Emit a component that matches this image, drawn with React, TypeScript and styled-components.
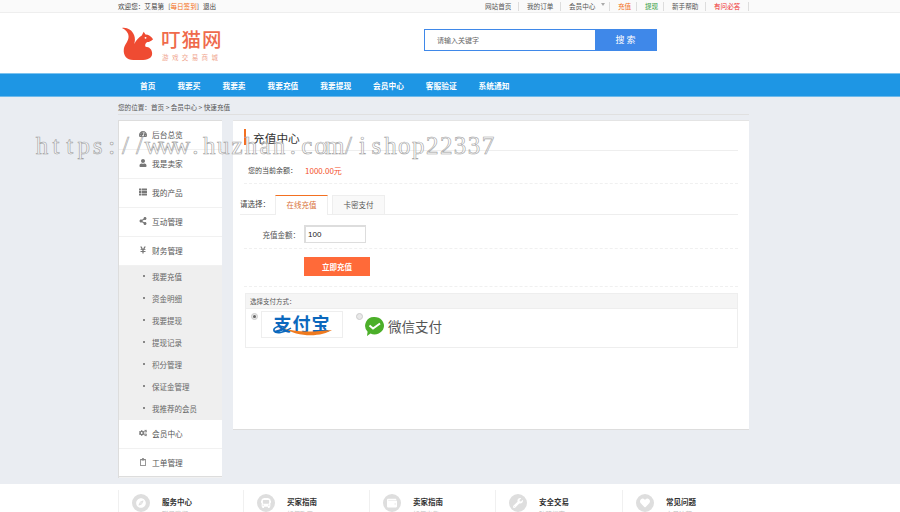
import React from "react";
import styled, { createGlobalStyle } from "styled-components";
import { FaTachometerAlt, FaUser, FaThList, FaShareAlt, FaYenSign, FaCogs, FaRegClipboard, FaCompass, FaBus, FaWallet, FaWrench, FaHeart } from "react-icons/fa";

const Global = createGlobalStyle`
  html, body { margin: 0; padding: 0; height: 512px; overflow: hidden; background: #eaedf2; }
  body { font-family: "Noto Sans CJK SC", "Liberation Sans", sans-serif; color: #444; }
  * { box-sizing: border-box; }
`;
const Page = styled.div`position: relative; width: 900px; height: 512px; overflow: hidden;`;
const TopBar = styled.div`height: 13px; background: #fafafa; border-bottom: 1px solid #eee; padding-left: 118px; display: flex; width: 100%;`;
const TopInner = styled.div`width: 631px; display: flex; justify-content: space-between; align-items: center; font-size: 6.6px; line-height: 12px; color: #444;`;
const Welcome = styled.div`display: flex; gap: 4px; white-space: nowrap;`;
const SignIn = styled.span`color: #f37021;`;
const TopLinks = styled.div`display: flex; height: 12px; align-items: center;`;
const TopLink = styled.span<{ $c?: string; $w: number }>`
  width: ${p => p.$w}px; height: 9px; line-height: 9px; border-right: 1px solid #ddd; white-space: nowrap; color: ${p => p.$c || "#555"};
  display: flex; align-items: center; gap: 6px; padding-left: 8px;
`;
const Caret = styled.i`width: 0; height: 0; border: 2.5px solid transparent; border-top: 3px solid #aaa; border-bottom: 0; margin-bottom: 3px;`;
const Header = styled.div`height: 60px; background: #fff; padding-left: 121px; display: flex; align-items: flex-start;`;
const Logo = styled.div`width: 303px; display: flex; padding-top: 14px; gap: 6px;`;
const LogoText = styled.div`display: flex; flex-direction: column; padding-top: 3px;`;
const LogoTitle = styled.div`font-size: 19.5px; line-height: 18px; font-weight: 500; color: #ef6a4c; letter-spacing: 1px; white-space: nowrap;`;
const LogoSub = styled.div`font-size: 6.5px; line-height: 8px; margin-top: 5px; color: #f0a58e; letter-spacing: 3.4px; padding-left: 1px; white-space: nowrap;`;
const Search = styled.div`display: flex; margin-top: 16px; height: 22px;`;
const SearchInput = styled.div`width: 172px; height: 22px; border: 1px solid #3f88e9; font-size: 7px; line-height: 20px; color: #666; padding-left: 12px;`;
const SearchButton = styled.div`width: 61px; background: #3f88e9; color: #fff; font-size: 9px; line-height: 22px; text-align: center; letter-spacing: 2px;`;
const Nav = styled.div`height: 24px; background: #1e96e4; border-top: 1px solid #7cc3ef; border-bottom: 1px solid #6db9ea; padding-left: 140px; display: flex; gap: 22px; color: #fff; font-size: 7.7px; font-weight: 700; line-height: 24px; white-space: nowrap;`;
const Content = styled.div`width: 631px; margin-left: 118px;`;
const Crumb = styled.div`height: 17px; margin-top: 1px; font-size: 6.6px; line-height: 18px; color: #555; border-bottom: 1px solid #e0e0e0; white-space: nowrap;`;
const Columns = styled.div`display: flex; gap: 11px; align-items: flex-start; margin-top: 5px;`;
const Side = styled.div`width: 104px; height: 358px; background: #fff; border-top: 1px solid #ddd; border-bottom: 2px solid #ddd; border-left: 1px solid #ddd; display: flex; flex-direction: column;`;
const SideItem = styled.div`height: 29px; flex: none; display: flex; align-items: center; padding: 0 0 2px 20px; gap: 5px; font-size: 7.7px; color: #555; border-bottom: 1px solid #f1f1f1; white-space: nowrap; svg { width: 8px; height: 8px; color: #777; flex: none; }`;
const SubList = styled.div`background: #efefef; height: 154px;`;
const SubItem = styled.div`height: 22px; display: flex; align-items: center; padding: 0 0 2px 24px; gap: 7px; font-size: 7.5px; color: #666; white-space: nowrap; &::before { content: ""; width: 2px; height: 2px; background: #888; }`;
const Panel = styled.div`width: 516px; height: 310px; background: #fff; border-bottom: 1px solid #ddd; padding: 8px 11px 0 7px; border-top: 1px solid #e4e4e4;`;
const Title = styled.div`height: 22px; margin-left: 4px; border-bottom: 1px solid #eee; display: flex;`;
const TitleText = styled.div`height: 16px; border-left: 2px solid #f37021; padding-left: 7px; font-size: 11.7px; line-height: 18px; color: #333;`;
const Balance = styled.div`margin-left: 4px; height: 33px; border-bottom: 1px dashed #f0f0f0; font-size: 7px; line-height: 39px; padding-left: 4px; display: flex; gap: 8px; white-space: nowrap;`;
const Money = styled.span`color: #f4512c; font-size: 8px;`;
const TabRow = styled.div`height: 31px; border-bottom: 1px solid #eee; display: flex; align-items: flex-end; font-size: 7.5px; gap: 4px;`;
const ChooseLabel = styled.div`width: 31px; height: 19px; line-height: 18px; white-space: nowrap;`;
const Tab = styled.div<{ $on?: boolean }>`
  width: 53px; height: ${p => (p.$on ? 20 : 19)}px; line-height: 18px; text-align: center;
  border-top: 1px solid ${p => (p.$on ? "#f37021" : "#eee")}; border-left: 1px solid #eee; border-right: 1px solid #eee;
  background: ${p => (p.$on ? "#fff" : "#f9f9f9")}; color: ${p => (p.$on ? "#d9733a" : "#555")}; margin-bottom: ${p => (p.$on ? "-1px" : "0")};
`;
const FormRow = styled.div`height: 34px; margin-left: 4px; border-bottom: 1px dashed #f0f0f0; display: flex; align-items: flex-start; padding-top: 10px;`;
const FormLabel = styled.div`width: 56px; text-align: right; font-size: 7.5px; line-height: 19px; color: #555; white-space: nowrap;`;
const Amount = styled.div`width: 62px; height: 18px; margin-left: 4px; border: 1px solid #ddd; border-left-width: 2px; border-top-width: 2px; font-family: "Liberation Sans", sans-serif; font-size: 8px; line-height: 16px; padding-left: 2px; color: #222;`;
const ButtonRow = styled.div`height: 38px; margin-left: 4px; border-bottom: 1px dashed #f0f0f0; padding: 8px 0 0 60px;`;
const Submit = styled.div`width: 66px; height: 19px; background: #ff6a39; color: #fff; font-size: 7.5px; font-weight: 700; line-height: 19px; text-align: center;`;
const PayBox = styled.div`height: 55px; margin: 6px 0 0 5px; border: 1px solid #eee; display: flex; flex-direction: column;`;
const PayHead = styled.div`height: 15px; background: #f5f5f5; border-bottom: 1px solid #eee; font-size: 6.5px; line-height: 15px; padding-left: 4px; color: #555; flex: none;`;
const PayRow = styled.div`display: flex; padding: 2px 0 0 5px;`;
const Radio = styled.span`width: 7px; height: 7px; border-radius: 50%; border: 1px solid #ccc; background: #e8e8e8; margin-top: 2px; flex: none; display: flex; align-items: center; justify-content: center;`;
const RadioDot = styled.i`width: 3px; height: 3px; border-radius: 50%; background: #666;`;
const Alipay = styled.div`position: relative; width: 82px; height: 27px; margin: 0 13px 0 3px; border: 1px solid #eee; display: flex; justify-content: center; overflow: hidden;`;
const AlipayText = styled.span`position: relative; font-size: 18px; font-weight: 700; line-height: 23px; color: #0b68bd; letter-spacing: 1px;`;
const Swoosh = styled.svg`position: absolute; left: 9px; top: 11px;`;
const Wechat = styled.div`display: flex; align-items: center; gap: 3px; margin: 3px 0 0 1px; color: #555; font-size: 13.5px; line-height: 20px;`;
const Footer = styled.div`position: absolute; left: 0; right: 0; top: 484px; height: 60px; background: #fff; padding: 6px 0 0 118px; display: flex;`;
const FootCol = styled.div<{ $w: number }>`width: ${p => p.$w}px; height: 40px; border-left: 1px solid #f0f0f0; padding: 4px 0 0 13px; display: flex; gap: 12px;`;
const FootIcon = styled.div`width: 18px; height: 18px; border-radius: 50%; background: #dedede; color: #fff; display: flex; align-items: center; justify-content: center; svg { width: 10px; height: 10px; }`;
const FootTitle = styled.div`font-size: 7.5px; font-weight: 700; line-height: 9px; margin-top: 3px; color: #333;`;
const FootSub = styled.div`font-size: 6.5px; line-height: 9px; margin-top: 4px; color: #bbb;`;
const Watermark = styled.div`position: absolute; left: 35px; top: 130px; display: flex; font-family: "Liberation Serif", serif; font-size: 25px; line-height: 32px; color: rgba(255,255,255,.55); -webkit-text-stroke: 0.6px #a0a0a0; white-space: nowrap; pointer-events: none;`;
const WatermarkChar = styled.span`width: 13.94px; display: flex; justify-content: center;`;

const topLinks: [string, number, string?][] = [["网站首页", 42], ["我的订单", 42], ["会员中心", 49], ["充值", 27, "#f37021"], ["提现", 27, "#2f9a3a"], ["新手帮助", 42], ["有问必答", 43, "#ee2b2b"]];
const subs = ["我要充值", "资金明细", "我要提现", "提现记录", "积分管理", "保证金管理", "我推荐的会员"];
const foot = [
  { t: "服务中心", s: "联系我们", w: 125, i: <FaCompass /> },
  { t: "买家指南", s: "如何购买", w: 126, i: <FaBus /> },
  { t: "卖家指南", s: "如何出售", w: 126, i: <FaWallet /> },
  { t: "安全交易", s: "防骗指南", w: 127, i: <FaWrench /> },
  { t: "常见问题", s: "交易流程", w: 127, i: <FaHeart /> },
];

export default function App() {
  return (
    <Page>
      <Global />
      <TopBar>
        <TopInner>
          <Welcome><span>欢迎您：艾易第</span><span>[<SignIn>每日签到</SignIn>]</span><span>退出</span></Welcome>
          <TopLinks>
            {topLinks.map(([t, w, c]) => (
              <TopLink key={t} $w={w} $c={c}>{t}{t === "会员中心" && <Caret />}</TopLink>
            ))}
          </TopLinks>
        </TopInner>
      </TopBar>
      <Header>
        <Logo>
          <svg width="34" height="33" viewBox="0 0 34 35">
            <path fill="#ef4b32" d="M0 1C5 0 11 3 13 9C14 12 14 15 13 18C15 14 18 11 21 9L23 5L25 8C28 8 31 10 33 13C31 15 29 16 27 16C25 17 24 19 25 21C29 21 32 24 32 28C32 33 27 35 20 35L12 35C5 35 1 30 2 23C3 18 7 15 7 10C7 6 4 3 0 1Z" />
            <circle cx="25" cy="11.5" r="1" fill="#fff" />
          </svg>
          <LogoText>
            <LogoTitle>叮猫网</LogoTitle>
            <LogoSub>游戏交易商城</LogoSub>
          </LogoText>
        </Logo>
        <Search>
          <SearchInput>请输入关键字</SearchInput>
          <SearchButton>搜索</SearchButton>
        </Search>
      </Header>
      <Nav>
        {["首页", "我要买", "我要卖", "我要充值", "我要提现", "会员中心", "客服验证", "系统通知"].map(t => <span key={t}>{t}</span>)}
      </Nav>
      <Content>
        <Crumb>您的位置：首页 &gt; 会员中心 &gt; 快速充值</Crumb>
        <Columns>
          <Side>
            <SideItem><FaTachometerAlt />后台总览</SideItem>
            <SideItem><FaUser />我是卖家</SideItem>
            <SideItem><FaThList />我的产品</SideItem>
            <SideItem><FaShareAlt />互动管理</SideItem>
            <SideItem><FaYenSign />财务管理</SideItem>
            <SubList>{subs.map(s => <SubItem key={s}>{s}</SubItem>)}</SubList>
            <SideItem><FaCogs />会员中心</SideItem>
            <SideItem><FaRegClipboard />工单管理</SideItem>
          </Side>
          <Panel>
            <Title><TitleText>充值中心</TitleText></Title>
            <Balance><span>您的当前余额：</span><Money>1000.00元</Money></Balance>
            <TabRow>
              <ChooseLabel>请选择：</ChooseLabel>
              <Tab $on>在线充值</Tab>
              <Tab>卡密支付</Tab>
            </TabRow>
            <FormRow><FormLabel>充值金额：</FormLabel><Amount>100</Amount></FormRow>
            <ButtonRow><Submit>立即充值</Submit></ButtonRow>
            <PayBox>
              <PayHead>选择支付方式：</PayHead>
              <PayRow>
                <Radio><RadioDot /></Radio>
                <Alipay>
                  <AlipayText>支付宝</AlipayText>
                  <Swoosh width="62" height="14" viewBox="0 0 62 14">
                    <path d="M11 4c12 6 32 5 50 3-9 6-32 9-50-3z" fill="#ef7a1f" />
                    <path d="M13 4C7 2 2 5 3 8c2 3 10 2 17-3" fill="none" stroke="#0b68bd" strokeWidth="1.5" />
                  </Swoosh>
                </Alipay>
                <Radio />
                <Wechat>
                  <svg width="21" height="21" viewBox="0 0 21 21">
                    <path fill="#4caf2a" d="M10.5 1a9.5 8.7 0 1 1-4 16.6L3 20l.6-4.3A8.7 8.7 0 0 1 10.5 1z" />
                    <path fill="none" stroke="#fff" strokeWidth="2" d="M5.5 9.5l3.5 3 7-5" />
                  </svg>
                  微信支付
                </Wechat>
              </PayRow>
            </PayBox>
          </Panel>
        </Columns>
      </Content>
      <Footer>
        {foot.map(f => (
          <FootCol key={f.t} $w={f.w}>
            <FootIcon>{f.i}</FootIcon>
            <div><FootTitle>{f.t}</FootTitle><FootSub>{f.s}</FootSub></div>
          </FootCol>
        ))}
      </Footer>
      <Watermark>
        {Array.from("https://www.huzhan.com/ishop22337").map((c, i) => <WatermarkChar key={i}>{c}</WatermarkChar>)}
      </Watermark>
    </Page>
  );
}
